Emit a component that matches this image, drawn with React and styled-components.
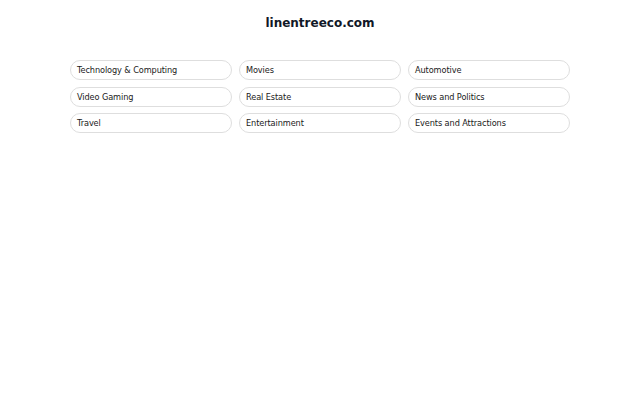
import React from "react";
import styled, { createGlobalStyle } from "styled-components";

const Global = createGlobalStyle`
  html, body { margin: 0; padding: 0; background: #fff; }
  body { font-family: "DejaVu Sans", sans-serif; color: #1f2328; }
`;

const Page = styled.main`
  display: flex;
  flex-direction: column;
  align-items: center;
  padding-top: 15px;
`;

const Title = styled.h1`
  margin: 0;
  font-size: 12px;
  font-weight: bold;
  color: #111827;
  line-height: 16px;
`;

const Grid = styled.div`
  margin-top: 29px;
  width: 500px;
  display: grid;
  grid-template-columns: repeat(3, 1fr);
  column-gap: 7px;
  row-gap: 6.5px;
`;

const Pill = styled.a`
  display: flex;
  align-items: center;
  height: 20px;
  box-sizing: border-box;
  padding: 0 6px;
  border: 1px solid #dedede;
  border-radius: 999px;
  font-size: 8.2px;
  letter-spacing: -0.1px;
  color: #1a1a1a;
  text-decoration: none;
`;

const items = [
  "Technology & Computing",
  "Movies",
  "Automotive",
  "Video Gaming",
  "Real Estate",
  "News and Politics",
  "Travel",
  "Entertainment",
  "Events and Attractions",
];

export default function App() {
  return (
    <>
      <Global />
      <Page>
        <Title>linentreeco.com</Title>
        <Grid>
          {items.map((t) => (
            <Pill key={t} href="#">{t}</Pill>
          ))}
        </Grid>
      </Page>
    </>
  );
}
